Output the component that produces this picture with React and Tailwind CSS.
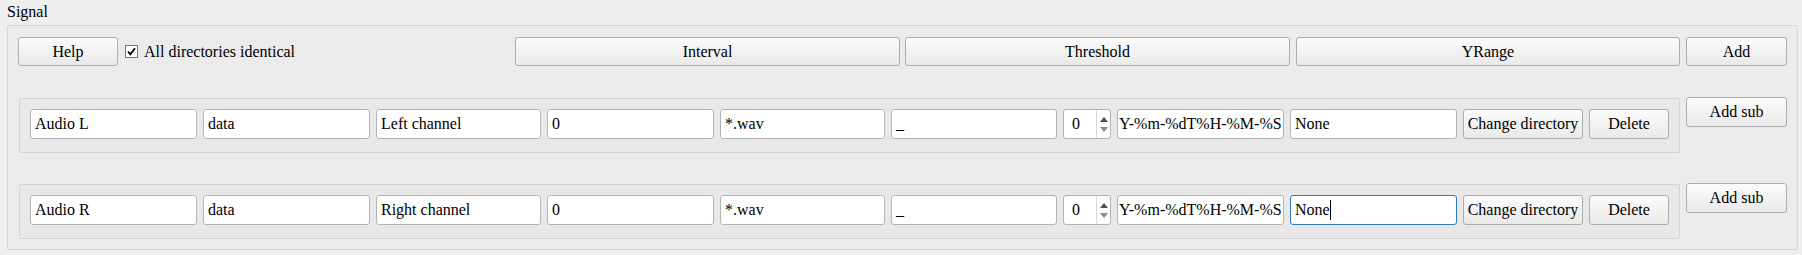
import React from "react";

const btn =
  "h-[29px] flex items-center justify-center border border-[#adadad] rounded-[3px] bg-gradient-to-b from-[#fbfbfb] to-[#e9e9e9] shrink-0";
const inp =
  "h-[30px] flex items-center border border-[#b3b3b3] rounded-[3px] bg-white pl-[4px] shrink-0 overflow-hidden whitespace-nowrap";

function Spin() {
  return (
    <div className="h-[30px] w-[48px] flex border border-[#b3b3b3] rounded-[3px] bg-white shrink-0">
      <div className="flex-1 flex items-center pl-[8px]">0</div>
      <div className="w-[14px] flex flex-col items-center justify-center gap-[5px] border-l border-[#d6d6d6]">
        <svg width="8" height="5" viewBox="0 0 8 5">
          <path d="M0 5 L4 0 L8 5 Z" fill="#505050" />
        </svg>
        <svg width="8" height="5" viewBox="0 0 8 5">
          <path d="M0 0 L4 5 L8 0 Z" fill="#8a8a8a" />
        </svg>
      </div>
    </div>
  );
}

function Row({ name, label, focused }) {
  return (
    <div className="flex items-start">
      <div className="ml-[11px] w-[1661px] h-[55px] border border-[#d4d4d4] rounded-[2px] bg-[#e8e8e8] pt-[10px] pl-[10px] flex gap-[6px]">
        <div className={`${inp} w-[167px]`}>{name}</div>
        <div className={`${inp} w-[167px]`}>data</div>
        <div className={`${inp} w-[165px]`}>{label}</div>
        <div className={`${inp} w-[167px]`}>0</div>
        <div className={`${inp} w-[165px]`}>*.wav</div>
        <div className={`${inp} w-[166px]`}>_</div>
        <Spin />
        <div className={`${inp} w-[167px] !pl-[1px]`}>Y-%m-%dT%H-%M-%S</div>
        {focused ? (
          <div className="h-[30px] w-[167px] flex items-center border border-[#3077bf] rounded-[3px] bg-white pl-[4px] shrink-0">
            None<span className="inline-block w-[1px] h-[20px] bg-black" />
          </div>
        ) : (
          <div className={`${inp} w-[167px]`}>None</div>
        )}
        <div className={`${btn} w-[120px] h-[30px]`}>Change directory</div>
        <div className={`${btn} w-[80px] h-[30px]`}>Delete</div>
      </div>
      <div className={`${btn} ml-[6px] -mt-[1px] w-[101px] h-[30px]`}>Add sub</div>
    </div>
  );
}

export default function App() {
  return (
    <div className="w-[1802px] h-[255px] bg-[#efefef] pl-[7px] pt-[1px] [font-family:'Liberation_Serif',serif] text-[16px] text-black leading-[20px]">
      <div className="h-[24px] pt-[1px]">Signal</div>
      <div className="w-[1791px] h-[225px] border border-[#d6d6d6] rounded-[2px] bg-[#ebebeb] pt-[11px]">
        <div className="flex items-center pl-[10px] pr-[10px]">
          <div className={`${btn} w-[100px]`}>Help</div>
          <div className="ml-[7px] w-[13px] h-[13px] border border-[#767676] bg-white flex items-center justify-center">
            <svg width="11" height="11" viewBox="0 0 11 11">
              <path d="M2 5.5 L4.3 8.3 L9 2.2" fill="none" stroke="#000" strokeWidth="1.8" />
            </svg>
          </div>
          <div className="ml-[6px]">All directories identical</div>
          <div className={`${btn} ml-auto w-[385px]`}>Interval</div>
          <div className={`${btn} ml-[5px] w-[385px]`}>Threshold</div>
          <div className={`${btn} ml-[6px] w-[384px]`}>YRange</div>
          <div className={`${btn} ml-[6px] w-[101px]`}>Add</div>
        </div>
        <div className="mt-[32px]">
          <Row name="Audio L" label="Left channel" />
        </div>
        <div className="mt-[31px]">
          <Row name="Audio R" label="Right channel" focused />
        </div>
      </div>
    </div>
  );
}
